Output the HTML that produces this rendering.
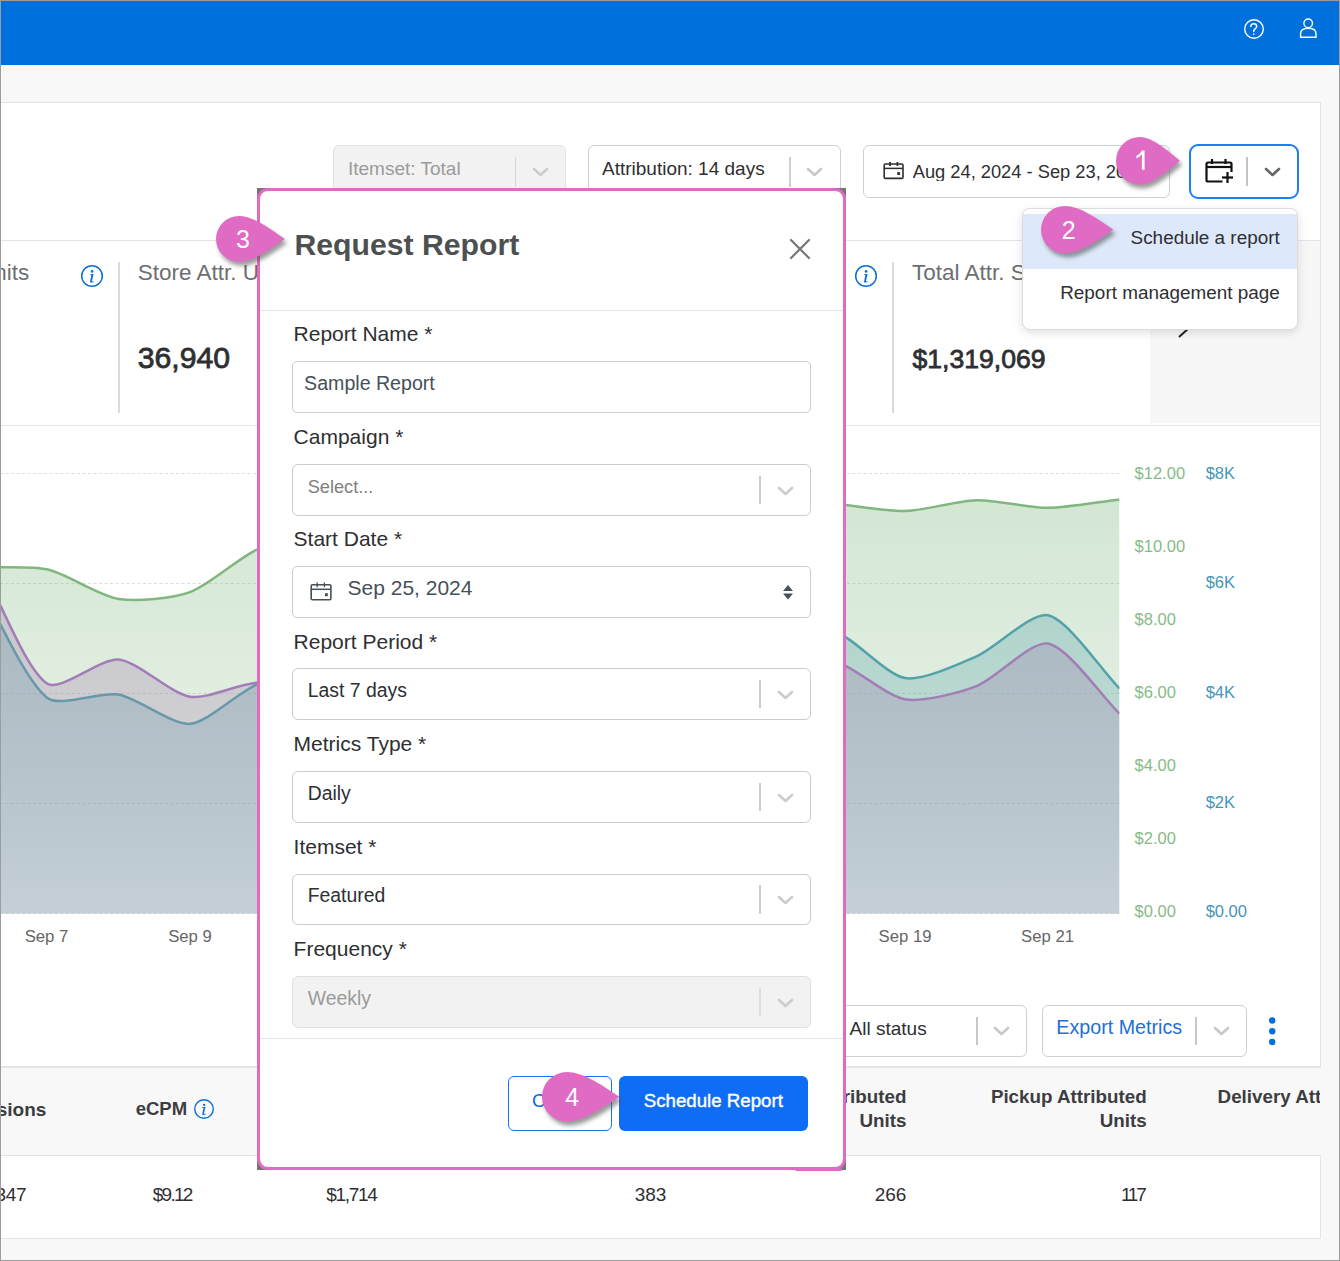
<!DOCTYPE html>
<html><head><meta charset="utf-8">
<style>
*{box-sizing:border-box;margin:0;padding:0}
html,body{width:1340px;height:1261px;overflow:hidden;background:#f8f8f8;font-family:"Liberation Sans",sans-serif;color:#2e2f32;position:relative}
.a{position:absolute}
.t{position:absolute;white-space:nowrap}
</style></head><body>
<div class="a" style="left:0px;top:0px;width:1340px;height:65px;background:#0071dc"></div>
<div class="a" style="left:0px;top:102px;width:1321px;height:1137px;background:#fff;border-top:1px solid #dfe0e3;border-right:1px solid #e3e4e6;border-bottom:1px solid #e3e4e6"></div>
<svg class="a" style="left:1240px;top:16px" width="80" height="30">
<circle cx="14" cy="13" r="9.3" fill="none" stroke="#fff" stroke-width="1.4"/>
<path d="M10.7,10.9 C10.7,8.9 12,7.8 13.7,7.8 C15.5,7.8 16.7,9 16.7,10.5 C16.7,12.4 13.7,13.3 13.7,15.1 L13.7,16" fill="none" stroke="#fff" stroke-width="1.4"/>
<circle cx="13.7" cy="18.1" r="0.85" fill="#fff"/>
<circle cx="68.2" cy="7.3" r="4.3" fill="none" stroke="#fff" stroke-width="1.4"/>
<path d="M60.6,21.3 L60.6,17.5 C60.6,14.3 63.3,12.2 68.4,12.2 C73.5,12.2 76,14.3 76,17.5 L76,21.3 Z" fill="none" stroke="#fff" stroke-width="1.4"/>
</svg>
<div class="a" style="left:332.5px;top:145px;width:233px;height:53px;background:#f2f2f2;border:1px solid #e2e2e2;border-radius:6px"></div>
<div class="t" style="top:158.62px;font-size:19px;line-height:19px;color:#9b9b9b;left:348px;">Itemset: Total</div>
<div class="a" style="left:515px;top:157px;width:1px;height:30px;background:#d8d8d8"></div>
<svg class="a" style="left:530.5px;top:166.0px" width="19" height="12"><polyline points="3,3 9.5,9 16,3" fill="none" stroke="#cccccc" stroke-width="2.6" stroke-linecap="round" stroke-linejoin="round"/></svg>
<div class="a" style="left:587.5px;top:145px;width:253.5px;height:53px;background:#fff;border:1px solid #cfd0d2;border-radius:6px"></div>
<div class="t" style="top:158.62px;font-size:19px;line-height:19px;color:#2e2f32;left:602px;">Attribution: 14 days</div>
<div class="a" style="left:789px;top:157px;width:1.5px;height:30px;background:#cfcfcf"></div>
<svg class="a" style="left:805.0px;top:166.0px" width="19" height="12"><polyline points="3,3 9.5,9 16,3" fill="none" stroke="#c8c8c8" stroke-width="2.6" stroke-linecap="round" stroke-linejoin="round"/></svg>
<div class="a" style="left:862.5px;top:145px;width:307px;height:53px;background:#fff;border:1px solid #cfd0d2;border-radius:6px"></div>
<svg class="a" style="left:882px;top:161px" width="24" height="21"><rect x="2.2" y="3" width="18.8" height="14.4" rx="1.2" fill="none" stroke="#2e2f32" stroke-width="1.6"/><line x1="2.2" y1="7.4" x2="21" y2="7.4" stroke="#2e2f32" stroke-width="1.5"/><line x1="8.1" y1="1" x2="8.1" y2="4.9" stroke="#2e2f32" stroke-width="1.8"/><line x1="15.4" y1="1" x2="15.4" y2="4.9" stroke="#2e2f32" stroke-width="1.8"/><rect x="15.2" y="11.2" width="2.9" height="2.7" fill="#2e2f32"/></svg>
<div class="t" style="top:163.01px;font-size:18.3px;line-height:18.3px;color:#2e2f32;left:912.7px;width:235px;overflow:hidden;">Aug 24, 2024 - Sep 23, 2024</div>
<div class="a" style="left:1189px;top:143.5px;width:110px;height:55.5px;background:#fff;border:2px solid #1b7ff5;border-radius:9px"></div>
<svg class="a" style="left:1202px;top:157px" width="34" height="28"><path d="M20.5,24.5 L6,24.5 Q4.5,24.5 4.5,23 L4.5,7 Q4.5,5.5 6,5.5 L28,5.5 Q29.5,5.5 29.5,7 L29.5,15" fill="none" stroke="#111" stroke-width="2.2"/><line x1="4.5" y1="10" x2="29.5" y2="10" stroke="#111" stroke-width="2.2"/><line x1="10" y1="2" x2="10" y2="7" stroke="#111" stroke-width="2.2"/><line x1="23.5" y1="2" x2="23.5" y2="7" stroke="#111" stroke-width="2.2"/><line x1="20" y1="20.5" x2="31" y2="20.5" stroke="#111" stroke-width="2.2"/><line x1="25.5" y1="15" x2="25.5" y2="26" stroke="#111" stroke-width="2.2"/></svg>
<div class="a" style="left:1246px;top:157px;width:1.5px;height:28.5px;background:#c4c4c4"></div>
<svg class="a" style="left:1263.1px;top:166.3px" width="19" height="12"><polyline points="3,3 9.5,9 16,3" fill="none" stroke="#666666" stroke-width="2.6" stroke-linecap="round" stroke-linejoin="round"/></svg>
<div class="a" style="left:0px;top:240px;width:1320px;height:1px;background:#e3e4e6"></div>
<div class="a" style="left:0px;top:424.5px;width:1320px;height:1px;background:#e3e4e6"></div>
<div class="a" style="left:1150px;top:241px;width:170px;height:182px;background:#f7f7f7"></div>
<div class="a" style="left:118px;top:262px;width:1.5px;height:150.5px;background:#d9dadc"></div>
<div class="a" style="left:892px;top:262px;width:1.5px;height:150.5px;background:#d9dadc"></div>
<div class="t" style="top:261.75px;font-size:22.5px;line-height:22.5px;color:#6d6e71;right:1310.7px;text-align:right;">Units</div>
<svg class="a" style="left:79px;top:262.8px" width="26" height="26"><g transform="translate(13,13) scale(1.000)"><circle cx="0" cy="0" r="10.3" fill="none" stroke="#0a6fd8" stroke-width="1.5"/><circle cx="0.1" cy="-4.6" r="1.35" fill="#0a6fd8"/><path d="M-1.9,-2.1 L1.6,-2.1 L0,5.0 C-0.1,5.5 0.3,5.7 1.9,5.3 L1.7,6.3 L-1.6,6.6 C-2.1,6.5 -2.0,6.0 -1.9,5.5 L-0.6,-1.2 L-1.9,-1.2 Z" fill="#0a6fd8"/></g></svg>
<div class="t" style="top:261.95px;font-size:22.5px;line-height:22.5px;color:#6d6e71;left:137.8px;">Store Attr. Units</div>
<div class="t" style="top:343.34px;font-size:30.2px;line-height:30.2px;color:#2e2f32;left:137.8px;-webkit-text-stroke:0.8px #2e2f32;">36,940</div>
<svg class="a" style="left:853px;top:262.8px" width="26" height="26"><g transform="translate(13,13) scale(1.000)"><circle cx="0" cy="0" r="10.3" fill="none" stroke="#0a6fd8" stroke-width="1.5"/><circle cx="0.1" cy="-4.6" r="1.35" fill="#0a6fd8"/><path d="M-1.9,-2.1 L1.6,-2.1 L0,5.0 C-0.1,5.5 0.3,5.7 1.9,5.3 L1.7,6.3 L-1.6,6.6 C-2.1,6.5 -2.0,6.0 -1.9,5.5 L-0.6,-1.2 L-1.9,-1.2 Z" fill="#0a6fd8"/></g></svg>
<div class="t" style="top:261.95px;font-size:22.5px;line-height:22.5px;color:#6d6e71;left:912px;">Total Attr. Sales</div>
<div class="t" style="top:346.38px;font-size:26.6px;line-height:26.6px;color:#2e2f32;left:912.5px;-webkit-text-stroke:0.8px #2e2f32;">$1,319,069</div>
<svg class="a" style="left:1175px;top:315px" width="20" height="26"><polyline points="4,4 14,13 4,22" fill="none" stroke="#222" stroke-width="2"/></svg>
<svg class="a" style="left:0;top:0" width="1340" height="1261">
<defs>
<clipPath id="pc"><rect x="0" y="430" width="1119.5" height="484"/></clipPath>
<linearGradient id="gg" gradientUnits="userSpaceOnUse" x1="0" y1="499" x2="0" y2="913.5"><stop offset="0" stop-color="#7fb77e" stop-opacity="0.344"/><stop offset="1" stop-color="#7fb77e" stop-opacity="0.117"/></linearGradient>
<linearGradient id="tg" gradientUnits="userSpaceOnUse" x1="0" y1="615" x2="0" y2="913.5"><stop offset="0" stop-color="#50a0a8" stop-opacity="0.306"/><stop offset="1" stop-color="#50a0a8" stop-opacity="0.21"/></linearGradient>
<linearGradient id="pg" gradientUnits="userSpaceOnUse" x1="0" y1="644" x2="0" y2="913.5"><stop offset="0" stop-color="#9e7eac" stop-opacity="0.31"/><stop offset="1" stop-color="#9e7eac" stop-opacity="0.21"/></linearGradient>
</defs>
<line x1="0" y1="473.5" x2="1119.5" y2="473.5" stroke="#dedede" stroke-width="1" stroke-dasharray="3,2.5"/><line x1="0" y1="583.5" x2="1119.5" y2="583.5" stroke="#dedede" stroke-width="1" stroke-dasharray="3,2.5"/><line x1="0" y1="693.5" x2="1119.5" y2="693.5" stroke="#dedede" stroke-width="1" stroke-dasharray="3,2.5"/><line x1="0" y1="803.5" x2="1119.5" y2="803.5" stroke="#dedede" stroke-width="1" stroke-dasharray="3,2.5"/><line x1="0" y1="913.5" x2="1119.5" y2="913.5" stroke="#dedede" stroke-width="1" stroke-dasharray="3,2.5"/>
<g clip-path="url(#pc)">
<path d="M-96.00,556.28 C-77.02,559.06 -43.57,564.99 -24.50,566.73 C-5.61,568.45 28.77,565.23 47.00,569.34 C66.72,573.79 98.81,595.82 118.50,598.96 C136.77,601.87 172.54,598.41 190.00,592.12 C210.50,584.74 241.04,555.16 261.50,547.45 C279.00,540.85 314.02,540.68 333.00,538.22 C351.98,535.76 385.51,531.30 404.50,528.89 C423.47,526.48 457.00,522.26 476.00,520.06 C494.96,517.86 528.50,514.14 547.50,512.30 C566.46,510.46 600.00,507.52 619.00,506.20 C637.96,504.88 671.51,503.00 690.50,502.36 C709.47,501.71 743.03,501.16 762.00,501.35 C780.98,501.54 814.56,502.49 833.50,503.77 C852.52,505.05 886.08,511.47 905.00,511.00 C924.04,510.53 957.47,500.63 976.50,500.20 C995.43,499.79 1029.03,507.94 1048.00,507.84 C1066.99,507.73 1100.52,501.65 1119.50,499.41 L1119.5,913.5 L-96.0,913.5 Z" fill="url(#gg)"/>
<path d="M-96.00,556.28 C-77.02,559.06 -43.57,564.99 -24.50,566.73 C-5.61,568.45 28.77,565.23 47.00,569.34 C66.72,573.79 98.81,595.82 118.50,598.96 C136.77,601.87 172.54,598.41 190.00,592.12 C210.50,584.74 241.04,555.16 261.50,547.45 C279.00,540.85 314.02,540.68 333.00,538.22 C351.98,535.76 385.51,531.30 404.50,528.89 C423.47,526.48 457.00,522.26 476.00,520.06 C494.96,517.86 528.50,514.14 547.50,512.30 C566.46,510.46 600.00,507.52 619.00,506.20 C637.96,504.88 671.51,503.00 690.50,502.36 C709.47,501.71 743.03,501.16 762.00,501.35 C780.98,501.54 814.56,502.49 833.50,503.77 C852.52,505.05 886.08,511.47 905.00,511.00 C924.04,510.53 957.47,500.63 976.50,500.20 C995.43,499.79 1029.03,507.94 1048.00,507.84 C1066.99,507.73 1100.52,501.65 1119.50,499.41" fill="none" stroke="#80b77e" stroke-width="2.5"/>
<path d="M-96.00,472.87 C-77.63,499.82 -41.99,550.25 -24.50,577.76 C-5.25,608.03 22.71,677.91 47.00,697.76 C59.45,707.93 100.83,691.36 118.50,694.58 C137.57,698.06 172.24,725.32 190.00,723.83 C208.98,722.24 241.81,688.30 261.50,682.60 C278.55,677.66 314.64,682.84 333.00,682.39 C351.38,681.94 386.15,680.25 404.50,679.09 C422.89,677.93 457.65,675.06 476.00,673.36 C494.39,671.65 529.15,667.92 547.50,665.84 C565.89,663.77 600.64,659.49 619.00,657.22 C637.38,654.94 672.13,650.44 690.50,648.13 C708.87,645.82 743.62,641.42 762.00,639.25 C780.36,637.08 816.71,626.67 833.50,631.23 C853.45,636.65 885.40,674.61 905.00,678.06 C922.14,681.08 959.04,664.06 976.50,656.39 C995.78,647.93 1031.61,611.62 1048.00,615.31 C1068.35,619.89 1101.13,669.76 1119.50,688.59 L1119.5,913.5 L-96.0,913.5 Z" fill="url(#tg)"/>
<path d="M-96.00,472.87 C-77.63,499.82 -41.99,550.25 -24.50,577.76 C-5.25,608.03 22.71,677.91 47.00,697.76 C59.45,707.93 100.83,691.36 118.50,694.58 C137.57,698.06 172.24,725.32 190.00,723.83 C208.98,722.24 241.81,688.30 261.50,682.60 C278.55,677.66 314.64,682.84 333.00,682.39 C351.38,681.94 386.15,680.25 404.50,679.09 C422.89,677.93 457.65,675.06 476.00,673.36 C494.39,671.65 529.15,667.92 547.50,665.84 C565.89,663.77 600.64,659.49 619.00,657.22 C637.38,654.94 672.13,650.44 690.50,648.13 C708.87,645.82 743.62,641.42 762.00,639.25 C780.36,637.08 816.71,626.67 833.50,631.23 C853.45,636.65 885.40,674.61 905.00,678.06 C922.14,681.08 959.04,664.06 976.50,656.39 C995.78,647.93 1031.61,611.62 1048.00,615.31 C1068.35,619.89 1101.13,669.76 1119.50,688.59" fill="none" stroke="#53a2aa" stroke-width="2.5"/>
<path d="M-96.00,471.16 C-77.59,493.41 -40.57,533.72 -24.50,557.59 C-3.75,588.41 22.79,666.33 47.00,683.57 C59.61,692.55 100.71,657.79 118.50,659.44 C137.52,661.20 170.67,693.70 190.00,696.80 C207.48,699.60 243.19,681.87 261.50,682.33 C280.01,682.80 314.38,696.90 333.00,700.44 C351.19,703.89 386.02,708.10 404.50,709.46 C422.84,710.82 457.61,711.36 476.00,710.99 C494.42,710.62 529.14,708.28 547.50,706.60 C565.96,704.90 600.64,700.46 619.00,697.87 C637.46,695.26 672.12,689.48 690.50,686.37 C708.93,683.26 743.58,676.92 762.00,673.70 C780.40,670.49 816.10,658.32 833.50,661.43 C852.91,664.91 885.61,695.95 905.00,699.31 C922.42,702.33 959.34,692.89 976.50,686.20 C996.15,678.54 1031.29,640.35 1048.00,643.56 C1068.11,647.43 1101.09,695.67 1119.50,713.73 L1119.5,913.5 L-96.0,913.5 Z" fill="url(#pg)"/>
<path d="M-96.00,471.16 C-77.59,493.41 -40.57,533.72 -24.50,557.59 C-3.75,588.41 22.79,666.33 47.00,683.57 C59.61,692.55 100.71,657.79 118.50,659.44 C137.52,661.20 170.67,693.70 190.00,696.80 C207.48,699.60 243.19,681.87 261.50,682.33 C280.01,682.80 314.38,696.90 333.00,700.44 C351.19,703.89 386.02,708.10 404.50,709.46 C422.84,710.82 457.61,711.36 476.00,710.99 C494.42,710.62 529.14,708.28 547.50,706.60 C565.96,704.90 600.64,700.46 619.00,697.87 C637.46,695.26 672.12,689.48 690.50,686.37 C708.93,683.26 743.58,676.92 762.00,673.70 C780.40,670.49 816.10,658.32 833.50,661.43 C852.91,664.91 885.61,695.95 905.00,699.31 C922.42,702.33 959.34,692.89 976.50,686.20 C996.15,678.54 1031.29,640.35 1048.00,643.56 C1068.11,647.43 1101.09,695.67 1119.50,713.73" fill="none" stroke="#a27db6" stroke-width="2.5"/>
</g>
</svg>
<div class="t" style="top:464.73px;font-size:16.5px;line-height:16.5px;color:#86bb85;left:1134.6px;">$12.00</div>
<div class="t" style="top:537.83px;font-size:16.5px;line-height:16.5px;color:#86bb85;left:1134.6px;">$10.00</div>
<div class="t" style="top:610.93px;font-size:16.5px;line-height:16.5px;color:#86bb85;left:1134.6px;">$8.00</div>
<div class="t" style="top:684.03px;font-size:16.5px;line-height:16.5px;color:#86bb85;left:1134.6px;">$6.00</div>
<div class="t" style="top:757.13px;font-size:16.5px;line-height:16.5px;color:#86bb85;left:1134.6px;">$4.00</div>
<div class="t" style="top:830.23px;font-size:16.5px;line-height:16.5px;color:#86bb85;left:1134.6px;">$2.00</div>
<div class="t" style="top:903.33px;font-size:16.5px;line-height:16.5px;color:#86bb85;left:1134.6px;">$0.00</div>
<div class="t" style="top:464.73px;font-size:16.5px;line-height:16.5px;color:#4496b8;left:1205.7px;">$8K</div>
<div class="t" style="top:574.33px;font-size:16.5px;line-height:16.5px;color:#4496b8;left:1205.7px;">$6K</div>
<div class="t" style="top:683.93px;font-size:16.5px;line-height:16.5px;color:#4496b8;left:1205.7px;">$4K</div>
<div class="t" style="top:793.53px;font-size:16.5px;line-height:16.5px;color:#4496b8;left:1205.7px;">$2K</div>
<div class="t" style="top:903.13px;font-size:16.5px;line-height:16.5px;color:#4496b8;left:1205.7px;">$0.00</div>
<div class="t" style="top:928.86px;font-size:16.7px;line-height:16.7px;color:#666666;left:-253.5px;width:600px;text-align:center;">Sep 7</div>
<div class="t" style="top:928.86px;font-size:16.7px;line-height:16.7px;color:#666666;left:-110px;width:600px;text-align:center;">Sep 9</div>
<div class="t" style="top:928.86px;font-size:16.7px;line-height:16.7px;color:#666666;left:605px;width:600px;text-align:center;">Sep 19</div>
<div class="t" style="top:928.86px;font-size:16.7px;line-height:16.7px;color:#666666;left:747.5px;width:600px;text-align:center;">Sep 21</div>
<div class="a" style="left:700px;top:1005.3px;width:326.5px;height:51.5px;background:#fff;border:1px solid #cfd0d2;border-radius:6px"></div>
<div class="t" style="top:1018.52px;font-size:19px;line-height:19px;color:#2e2f32;left:849.6px;">All status</div>
<div class="a" style="left:975.5px;top:1017px;width:2px;height:28px;background:#c8c8c8"></div>
<svg class="a" style="left:992.0px;top:1025.4px" width="19" height="12"><polyline points="3,3 9.5,9 16,3" fill="none" stroke="#c8c8c8" stroke-width="2.6" stroke-linecap="round" stroke-linejoin="round"/></svg>
<div class="a" style="left:1041.5px;top:1005.3px;width:205px;height:51.5px;background:#fff;border:1px solid #cfd0d2;border-radius:6px"></div>
<div class="t" style="top:1018.12px;font-size:19.7px;line-height:19.7px;color:#1f6fd6;left:1056.3px;">Export Metrics</div>
<div class="a" style="left:1195px;top:1017px;width:2px;height:28px;background:#c8c8c8"></div>
<svg class="a" style="left:1212.2px;top:1025.4px" width="19" height="12"><polyline points="3,3 9.5,9 16,3" fill="none" stroke="#c8c8c8" stroke-width="2.6" stroke-linecap="round" stroke-linejoin="round"/></svg>
<svg class="a" style="left:1266px;top:1014px" width="12" height="34"><circle cx="6.2" cy="6.5" r="3.2" fill="#0071dc"/><circle cx="6.2" cy="17.2" r="3.2" fill="#0071dc"/><circle cx="6.2" cy="27.9" r="3.2" fill="#0071dc"/></svg>
<div class="a" style="left:0px;top:1066px;width:1320px;height:1.5px;background:#e3e4e6"></div>
<div class="a" style="left:0px;top:1067.5px;width:1340px;height:87.5px;background:#f8f8f8"></div>
<div class="a" style="left:0px;top:1155px;width:1320px;height:1px;background:#e3e4e6"></div>
<div class="a" style="left:0px;top:1238px;width:1320px;height:1px;background:#e3e4e6"></div>
<div class="a" style="left:0px;top:1239px;width:1340px;height:22px;background:#f8f8f8"></div>
<div class="t" style="top:1099.72px;font-size:19px;line-height:19px;color:#3c3d40;font-weight:bold;right:1293.6px;text-align:right;">Impressions</div>
<div class="t" style="top:1100.14px;font-size:18.5px;line-height:18.5px;color:#3c3d40;font-weight:bold;left:135.7px;">eCPM</div>
<svg class="a" style="left:190.8px;top:1095.6px" width="26" height="26"><g transform="translate(13,13) scale(0.903)"><circle cx="0" cy="0" r="10.3" fill="none" stroke="#0a6fd8" stroke-width="1.5"/><circle cx="0.1" cy="-4.6" r="1.35" fill="#0a6fd8"/><path d="M-1.9,-2.1 L1.6,-2.1 L0,5.0 C-0.1,5.5 0.3,5.7 1.9,5.3 L1.7,6.3 L-1.6,6.6 C-2.1,6.5 -2.0,6.0 -1.9,5.5 L-0.6,-1.2 L-1.9,-1.2 Z" fill="#0a6fd8"/></g></svg>
<div class="t" style="top:1088.09px;font-size:18.8px;line-height:18.8px;color:#3c3d40;font-weight:bold;right:433.6px;text-align:right;">Store Attributed</div>
<div class="t" style="top:1112.39px;font-size:18.8px;line-height:18.8px;color:#3c3d40;font-weight:bold;right:433.6px;text-align:right;">Units</div>
<div class="t" style="top:1088.09px;font-size:18.8px;line-height:18.8px;color:#3c3d40;font-weight:bold;right:193.29999999999995px;text-align:right;">Pickup Attributed</div>
<div class="t" style="top:1112.39px;font-size:18.8px;line-height:18.8px;color:#3c3d40;font-weight:bold;right:193.29999999999995px;text-align:right;">Units</div>
<div class="t" style="top:1088.09px;font-size:18.8px;line-height:18.8px;color:#3c3d40;font-weight:bold;left:1217.6px;width:102.5px;overflow:hidden;">Delivery Attributed</div>
<div class="t" style="top:1184.92px;font-size:19px;line-height:19px;color:#2e2f32;letter-spacing:-0.3px;right:1313.7px;text-align:right;">1,347</div>
<div class="t" style="top:1184.92px;font-size:19px;line-height:19px;color:#2e2f32;letter-spacing:-1.7px;right:1148.3px;text-align:right;">$9.12</div>
<div class="t" style="top:1184.92px;font-size:19px;line-height:19px;color:#2e2f32;letter-spacing:-1.35px;right:963.6500000000001px;text-align:right;">$1,714</div>
<div class="t" style="top:1184.92px;font-size:19px;line-height:19px;color:#2e2f32;letter-spacing:-0.1px;right:673.8000000000001px;text-align:right;">383</div>
<div class="t" style="top:1184.92px;font-size:19px;line-height:19px;color:#2e2f32;letter-spacing:0px;right:433.6px;text-align:right;">266</div>
<div class="t" style="top:1184.92px;font-size:19px;line-height:19px;color:#2e2f32;letter-spacing:-2.3px;right:195.5999999999999px;text-align:right;">117</div>
<div class="a" style="left:1021.5px;top:208.3px;width:276px;height:121.5px;background:#fff;border:1px solid #dcdcdc;border-radius:8px;box-shadow:0 3px 10px rgba(0,0,0,0.12);z-index:20;overflow:hidden"></div>
<div class="a" style="left:1022.5px;top:214px;width:274px;height:54.7px;background:#dde9fb;z-index:21"></div>
<div class="t" style="top:229.40px;font-size:18.9px;line-height:18.9px;color:#2e2f32;right:60.299999999999955px;text-align:right;z-index:22;">Schedule a report</div>
<div class="t" style="top:283.60px;font-size:18.9px;line-height:18.9px;color:#2e2f32;right:60.299999999999955px;text-align:right;z-index:22;">Report management page</div>
<div class="a" style="left:257px;top:188px;width:589px;height:982px;background:#747474;z-index:30"></div>
<div class="a" style="left:257px;top:188px;width:589px;height:982px;background:#fff;border:3px solid #e06bc4;border-radius:11px;z-index:31"></div>
<div class="a" style="left:0;top:0;width:1340px;height:1261px;z-index:32">
<div class="t" style="top:230.14px;font-size:30.2px;line-height:30.2px;color:#4d5050;font-weight:bold;left:294.5px;">Request Report</div>
<svg class="a" style="left:786px;top:235px" width="28" height="28"><path d="M5,5 L23,23 M23,5 L5,23" stroke="#777" stroke-width="2.2" stroke-linecap="round"/></svg>
<div class="a" style="left:260px;top:310px;width:583px;height:1px;background:#e3e4e8"></div>
<div class="t" style="top:323.22px;font-size:21px;line-height:21px;color:#2e2f32;left:293.6px;">Report Name *</div>
<div class="a" style="left:292.4px;top:361.3px;width:518.3px;height:51.5px;background:#fff;border:1px solid #c7cdd3;border-radius:5px"></div>
<div class="t" style="top:374.21px;font-size:19.6px;line-height:19.6px;color:#46505a;left:304.1px;">Sample Report</div>
<div class="t" style="top:425.72px;font-size:21px;line-height:21px;color:#2e2f32;left:293.6px;">Campaign *</div>
<div class="a" style="left:292.4px;top:464.4px;width:518.3px;height:51.5px;background:#fff;border:1px solid #cbcbcb;border-radius:6px"></div>
<div class="t" style="top:478.19px;font-size:18.2px;line-height:18.2px;color:#808080;left:307.7px;">Select...</div>
<div class="a" style="left:759.3px;top:476.2px;width:1.8px;height:28.3px;background:#cccccc"></div>
<svg class="a" style="left:776.3px;top:485.2px" width="19" height="12"><polyline points="3,3 9.5,9 16,3" fill="none" stroke="#cccccc" stroke-width="2.6" stroke-linecap="round" stroke-linejoin="round"/></svg>
<div class="t" style="top:528.22px;font-size:21px;line-height:21px;color:#2e2f32;left:293.6px;">Start Date *</div>
<div class="a" style="left:292.4px;top:566px;width:518.3px;height:51.5px;background:#fff;border:1px solid #c7cdd3;border-radius:5px"></div>
<svg class="a" style="left:309px;top:582px" width="25" height="22"><rect x="2.2" y="2.8" width="19.7" height="15" rx="1.2" fill="none" stroke="#46505a" stroke-width="1.6"/><line x1="2.2" y1="7.3" x2="21.9" y2="7.3" stroke="#46505a" stroke-width="1.5"/><line x1="8.2" y1="0.5" x2="8.2" y2="5.2" stroke="#46505a" stroke-width="1.3"/><line x1="15.4" y1="0.5" x2="15.4" y2="5.2" stroke="#46505a" stroke-width="1.3"/><rect x="16" y="11.2" width="2.8" height="3" fill="#46505a"/></svg>
<div class="t" style="top:576.72px;font-size:21px;line-height:21px;color:#46505a;left:347.5px;">Sep 25, 2024</div>
<svg class="a" style="left:782px;top:584px" width="12" height="17"><path d="M1,7 L6,1 L11,7 Z M1,9.5 L6,15.5 L11,9.5 Z" fill="#4a5058"/></svg>
<div class="t" style="top:630.92px;font-size:21px;line-height:21px;color:#2e2f32;left:293.6px;">Report Period *</div>
<div class="a" style="left:292.4px;top:668.4px;width:518.3px;height:51.5px;background:#fff;border:1px solid #cbcbcb;border-radius:6px"></div>
<div class="t" style="top:681.18px;font-size:19.4px;line-height:19.4px;color:#2e2f32;left:307.7px;">Last 7 days</div>
<div class="a" style="left:759.3px;top:680.1999999999999px;width:1.8px;height:28.3px;background:#cccccc"></div>
<svg class="a" style="left:776.3px;top:689.1999999999999px" width="19" height="12"><polyline points="3,3 9.5,9 16,3" fill="none" stroke="#cccccc" stroke-width="2.6" stroke-linecap="round" stroke-linejoin="round"/></svg>
<div class="t" style="top:733.42px;font-size:21px;line-height:21px;color:#2e2f32;left:293.6px;">Metrics Type *</div>
<div class="a" style="left:292.4px;top:771.2px;width:518.3px;height:51.5px;background:#fff;border:1px solid #cbcbcb;border-radius:6px"></div>
<div class="t" style="top:783.98px;font-size:19.4px;line-height:19.4px;color:#2e2f32;left:307.7px;">Daily</div>
<div class="a" style="left:759.3px;top:783.0px;width:1.8px;height:28.3px;background:#cccccc"></div>
<svg class="a" style="left:776.3px;top:792.0px" width="19" height="12"><polyline points="3,3 9.5,9 16,3" fill="none" stroke="#cccccc" stroke-width="2.6" stroke-linecap="round" stroke-linejoin="round"/></svg>
<div class="t" style="top:835.82px;font-size:21px;line-height:21px;color:#2e2f32;left:293.6px;">Itemset *</div>
<div class="a" style="left:292.4px;top:873.6px;width:518.3px;height:51.5px;background:#fff;border:1px solid #cbcbcb;border-radius:6px"></div>
<div class="t" style="top:886.38px;font-size:19.4px;line-height:19.4px;color:#2e2f32;left:307.7px;">Featured</div>
<div class="a" style="left:759.3px;top:885.4px;width:1.8px;height:28.3px;background:#cccccc"></div>
<svg class="a" style="left:776.3px;top:894.4px" width="19" height="12"><polyline points="3,3 9.5,9 16,3" fill="none" stroke="#cccccc" stroke-width="2.6" stroke-linecap="round" stroke-linejoin="round"/></svg>
<div class="t" style="top:938.22px;font-size:21px;line-height:21px;color:#2e2f32;left:293.6px;">Frequency *</div>
<div class="a" style="left:292.4px;top:976px;width:518.3px;height:51.5px;background:#f2f2f2;border:1px solid #e0e0e0;border-radius:6px"></div>
<div class="t" style="top:988.78px;font-size:19.4px;line-height:19.4px;color:#9a9a9a;left:307.7px;">Weekly</div>
<div class="a" style="left:759.3px;top:987.8px;width:1.8px;height:28.3px;background:#dedede"></div>
<svg class="a" style="left:776.3px;top:996.8px" width="19" height="12"><polyline points="3,3 9.5,9 16,3" fill="none" stroke="#cccccc" stroke-width="2.6" stroke-linecap="round" stroke-linejoin="round"/></svg>
<div class="a" style="left:260px;top:1038px;width:583px;height:1px;background:#e3e4e8"></div>
<div class="a" style="left:508px;top:1076px;width:104px;height:54.5px;background:#fff;border:1px solid #1a73e8;border-radius:6px"></div>
<div class="t" style="top:1091.87px;font-size:18.7px;line-height:18.7px;color:#0a6bd6;left:532px;">Cancel</div>
<div class="a" style="left:619px;top:1076px;width:188.5px;height:54.5px;background:#0f6cf5;border-radius:6px"></div>
<div class="t" style="top:1091.87px;font-size:18.7px;line-height:18.7px;color:#ffffff;left:413.29999999999995px;width:600px;text-align:center;-webkit-text-stroke:0.4px #fff;">Schedule Report</div>
<div class="a" style="left:795px;top:1167.8px;width:47px;height:3.2px;background:#e16bc4;border-radius:2px"></div>
</div>
<svg width="0" height="0" style="position:absolute"><defs><filter id="blur" x="-20%" y="-20%" width="140%" height="140%"><feGaussianBlur stdDeviation="2.2"/></filter></defs></svg>
<svg class="a" style="left:1104.00px;top:125.20px;z-index:50" width="87.8" height="71.6"><g transform="translate(35.80,35.80)"><path d="M40.00,0 C26.00,-11.90 12.00,-23.80 0,-23.80 A23.80,23.80 0 0 0 0,23.80 C12.00,23.80 26.00,11.90 40.00,0 Z" fill="#4a4a4a" opacity="0.55" transform="translate(2.5,4)" filter="url(#blur)"/><path d="M40.00,0 C26.00,-11.90 12.00,-23.80 0,-23.80 A23.80,23.80 0 0 0 0,23.80 C12.00,23.80 26.00,11.90 40.00,0 Z" fill="#e06bc4"/><path d="M2.1,-10.4 L4.8,-10.4 L4.8,8.9 L2.1,8.9 L2.1,-6.6 C0.9,-5.2 -1.2,-3.6 -3.3,-2.4 L-3.3,-5.0 C-1.0,-6.3 1.2,-8.3 2.1,-10.4 Z" fill="#fff"/></g></svg>
<svg class="a" style="left:1029.30px;top:194.30px;z-index:50" width="96.3" height="71.4"><g transform="translate(35.70,35.70)"><path d="M48.60,0 C31.59,-11.85 14.58,-23.70 0,-23.70 A23.70,23.70 0 0 0 0,23.70 C14.58,23.70 31.59,11.85 48.60,0 Z" fill="#4a4a4a" opacity="0.55" transform="translate(2.5,4)" filter="url(#blur)"/><path d="M48.60,0 C31.59,-11.85 14.58,-23.70 0,-23.70 A23.70,23.70 0 0 0 0,23.70 C14.58,23.70 31.59,11.85 48.60,0 Z" fill="#e06bc4"/><text x="4" y="0" dy="9" text-anchor="middle" fill="#fff" font-family="Liberation Sans" font-size="25">2</text></g></svg>
<svg class="a" style="left:204.00px;top:204.10px;z-index:50" width="92.7" height="69.8"><g transform="translate(34.90,34.90)"><path d="M45.80,0 C29.77,-11.45 13.74,-22.90 0,-22.90 A22.90,22.90 0 0 0 0,22.90 C13.74,22.90 29.77,11.45 45.80,0 Z" fill="#4a4a4a" opacity="0.55" transform="translate(2.5,4)" filter="url(#blur)"/><path d="M45.80,0 C29.77,-11.45 13.74,-22.90 0,-22.90 A22.90,22.90 0 0 0 0,22.90 C13.74,22.90 29.77,11.45 45.80,0 Z" fill="#e06bc4"/><text x="4" y="0" dy="9" text-anchor="middle" fill="#fff" font-family="Liberation Sans" font-size="25">3</text></g></svg>
<svg class="a" style="left:530.30px;top:1060.30px;z-index:50" width="101.3" height="73.6"><g transform="translate(36.80,36.80)"><path d="M52.50,0 C34.12,-12.40 15.75,-24.80 0,-24.80 A24.80,24.80 0 0 0 0,24.80 C15.75,24.80 34.12,12.40 52.50,0 Z" fill="#4a4a4a" opacity="0.55" transform="translate(2.5,4)" filter="url(#blur)"/><path d="M52.50,0 C34.12,-12.40 15.75,-24.80 0,-24.80 A24.80,24.80 0 0 0 0,24.80 C15.75,24.80 34.12,12.40 52.50,0 Z" fill="#e06bc4"/><text x="5.5" y="0" dy="9" text-anchor="middle" fill="#fff" font-family="Liberation Sans" font-size="25">4</text></g></svg>
<div class="a" style="left:0;top:0;width:1340px;height:1261px;border:1px solid #9c9c9c;z-index:100"></div>
</body></html>
